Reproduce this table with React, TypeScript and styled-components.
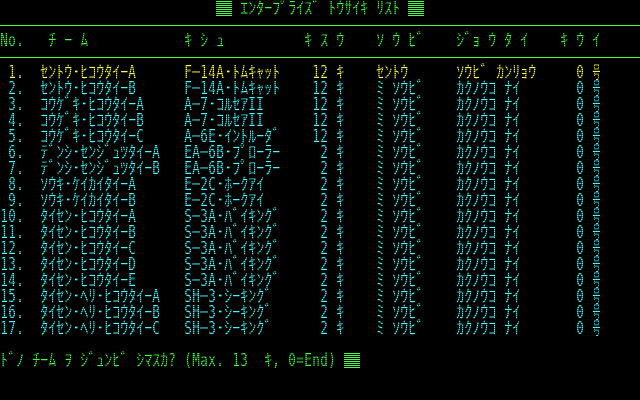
import React from 'react';
import styled, { createGlobalStyle } from 'styled-components';

const GREEN = '#44ff44';
const YELLOW = '#ffff44';
const CYAN = '#44ffff';

const GlobalStyle = createGlobalStyle`
  html, body {
    margin: 0;
    padding: 0;
    background: #000;
  }
`;

const Screen = styled.div`
  width: 640px;
  height: 400px;
  background: #000;
  overflow: hidden;
  display: flex;
  flex-direction: column;
  font-family: 'DejaVu Sans Mono', 'Noto Sans CJK JP', monospace;
  font-size: 17px;
  line-height: 16px;
  /* crt scanlines: even pixel rows dimmed */
  mask-image: repeating-linear-gradient(to bottom, rgba(0, 0, 0, 0.45) 0 1px, #000 1px 2px);
  -webkit-mask-image: repeating-linear-gradient(to bottom, rgba(0, 0, 0, 0.45) 0 1px, #000 1px 2px);
`;

const Row = styled.div<{ $color: string }>`
  display: flex;
  height: 16px;
  color: ${(p) => p.$color};
`;

const RuleRow = styled.div`
  height: 16px;
  display: flex;
  flex-direction: column;
  padding-top: 9px;
  box-sizing: border-box;

  &::after {
    content: '';
    height: 1px;
    background: ${GREEN};
  }
`;

const Cell = styled.span`
  width: 8px;
  height: 16px;
  flex: none;
  display: flex;
  justify-content: center;
  white-space: pre;
`;

const Glyph = styled.span<{ $kind: 'latin' | 'kana' | 'wide' }>`
  display: inline-block;
  transform: scaleX(${(p) => (p.$kind === 'latin' ? 0.74 : p.$kind === 'kana' ? 0.94 : 0.46)});
  transform-origin: center;
`;

const Block = styled.span`
  width: 16px;
  height: 16px;
  flex: none;
  background: repeating-linear-gradient(to bottom, transparent 0 1px, ${GREEN} 1px 2px);
`;

const kindOf = (ch: string): 'latin' | 'kana' | 'wide' => {
  const c = ch.charCodeAt(0);
  if (c >= 0xff61 && c <= 0xff9f) return 'kana';
  if (c >= 0x3000) return 'wide';
  return 'latin';
};

// place text segments on an 80 column line
const place = (parts: [number, string][]) => {
  const line = Array(80).fill(' ');
  parts.forEach(([col, text]) => {
    Array.from(text).forEach((ch, i) => {
      line[col + i] = ch;
    });
  });
  return line;
};

const TextLine = ({ parts, color }: { parts: [number, string][]; color: string }) => {
  const chars = place(parts);
  const out: React.ReactNode[] = [];
  for (let i = 0; i < chars.length; i++) {
    const ch = chars[i];
    if (ch === '\t') continue;
    if (ch === '▤') {
      out.push(<Block key={i} />);
      continue;
    }
    const shown = ch === '-' ? '─' : ch;
    out.push(
      <Cell key={i}>
        {ch === ' ' ? ' ' : <Glyph $kind={kindOf(shown)}>{shown}</Glyph>}
      </Cell>
    );
  }
  return <Row $color={color}>{out}</Row>;
};

type Team = { name: string; plane: string; count: number; equip: string; status: string };

const teams: Team[] = [
  { name: 'ｾﾝﾄｳ･ﾋｺｳﾀｲｰA', plane: 'F-14A･ﾄﾑｷｬｯﾄ', count: 12, equip: 'ｾﾝﾄｳ', status: 'ｿｳﾋﾞ ｶﾝﾘｮｳ' },
  { name: 'ｾﾝﾄｳ･ﾋｺｳﾀｲｰB', plane: 'F-14A･ﾄﾑｷｬｯﾄ', count: 12, equip: 'ﾐ ｿｳﾋﾞ', status: 'ｶｸﾉｳｺ ﾅｲ' },
  { name: 'ｺｳｹﾞｷ･ﾋｺｳﾀｲｰA', plane: 'A-7･ｺﾙｾｱII', count: 12, equip: 'ﾐ ｿｳﾋﾞ', status: 'ｶｸﾉｳｺ ﾅｲ' },
  { name: 'ｺｳｹﾞｷ･ﾋｺｳﾀｲｰB', plane: 'A-7･ｺﾙｾｱII', count: 12, equip: 'ﾐ ｿｳﾋﾞ', status: 'ｶｸﾉｳｺ ﾅｲ' },
  { name: 'ｺｳｹﾞｷ･ﾋｺｳﾀｲｰC', plane: 'A-6E･ｲﾝﾄﾙｰﾀﾞ', count: 12, equip: 'ﾐ ｿｳﾋﾞ', status: 'ｶｸﾉｳｺ ﾅｲ' },
  { name: 'ﾃﾞﾝｼ･ｾﾝｼﾞｭﾂﾀｲｰA', plane: 'EA-6B･ﾌﾟﾛｰﾗｰ', count: 2, equip: 'ﾐ ｿｳﾋﾞ', status: 'ｶｸﾉｳｺ ﾅｲ' },
  { name: 'ﾃﾞﾝｼ･ｾﾝｼﾞｭﾂﾀｲｰB', plane: 'EA-6B･ﾌﾟﾛｰﾗｰ', count: 2, equip: 'ﾐ ｿｳﾋﾞ', status: 'ｶｸﾉｳｺ ﾅｲ' },
  { name: 'ｿｳｷ･ｹｲｶｲﾀｲｰA', plane: 'E-2C･ﾎｰｸｱｲ', count: 2, equip: 'ﾐ ｿｳﾋﾞ', status: 'ｶｸﾉｳｺ ﾅｲ' },
  { name: 'ｿｳｷ･ｹｲｶｲﾀｲｰB', plane: 'E-2C･ﾎｰｸｱｲ', count: 2, equip: 'ﾐ ｿｳﾋﾞ', status: 'ｶｸﾉｳｺ ﾅｲ' },
  { name: 'ﾀｲｾﾝ･ﾋｺｳﾀｲｰA', plane: 'S-3A･ﾊﾞｲｷﾝｸﾞ', count: 2, equip: 'ﾐ ｿｳﾋﾞ', status: 'ｶｸﾉｳｺ ﾅｲ' },
  { name: 'ﾀｲｾﾝ･ﾋｺｳﾀｲｰB', plane: 'S-3A･ﾊﾞｲｷﾝｸﾞ', count: 2, equip: 'ﾐ ｿｳﾋﾞ', status: 'ｶｸﾉｳｺ ﾅｲ' },
  { name: 'ﾀｲｾﾝ･ﾋｺｳﾀｲｰC', plane: 'S-3A･ﾊﾞｲｷﾝｸﾞ', count: 2, equip: 'ﾐ ｿｳﾋﾞ', status: 'ｶｸﾉｳｺ ﾅｲ' },
  { name: 'ﾀｲｾﾝ･ﾋｺｳﾀｲｰD', plane: 'S-3A･ﾊﾞｲｷﾝｸﾞ', count: 2, equip: 'ﾐ ｿｳﾋﾞ', status: 'ｶｸﾉｳｺ ﾅｲ' },
  { name: 'ﾀｲｾﾝ･ﾋｺｳﾀｲｰE', plane: 'S-3A･ﾊﾞｲｷﾝｸﾞ', count: 2, equip: 'ﾐ ｿｳﾋﾞ', status: 'ｶｸﾉｳｺ ﾅｲ' },
  { name: 'ﾀｲｾﾝ･ﾍﾘ･ﾋｺｳﾀｲｰA', plane: 'SH-3･ｼｰｷﾝｸﾞ', count: 2, equip: 'ﾐ ｿｳﾋﾞ', status: 'ｶｸﾉｳｺ ﾅｲ' },
  { name: 'ﾀｲｾﾝ･ﾍﾘ･ﾋｺｳﾀｲｰB', plane: 'SH-3･ｼｰｷﾝｸﾞ', count: 2, equip: 'ﾐ ｿｳﾋﾞ', status: 'ｶｸﾉｳｺ ﾅｲ' },
  { name: 'ﾀｲｾﾝ･ﾍﾘ･ﾋｺｳﾀｲｰC', plane: 'SH-3･ｼｰｷﾝｸﾞ', count: 2, equip: 'ﾐ ｿｳﾋﾞ', status: 'ｶｸﾉｳｺ ﾅｲ' },
];

const App = () => {
  return (
    <>
      <GlobalStyle />
      <Screen>
        <TextLine color={GREEN} parts={[[27, '▤\t ｴﾝﾀｰﾌﾟﾗｲｽﾞ ﾄｳｻｲｷ ﾘｽﾄ ▤\t']]} />
        <RuleRow />
        <TextLine
          color={GREEN}
          parts={[
            [0, 'No.'],
            [6, 'ﾁ ｰ ﾑ'],
            [23, 'ｷ ｼ ｭ'],
            [38, 'ｷ ｽ ｳ'],
            [47, 'ｿ ｳ ﾋﾞ'],
            [57, 'ｼﾞｮ ｳ ﾀ ｲ'],
            [70, 'ｷ ｳ ｲ'],
          ]}
        />
        <RuleRow />
        {teams.map((t, i) => (
          <TextLine
            key={i}
            color={i === 0 ? YELLOW : CYAN}
            parts={[
              [0, `${String(i + 1).padStart(2)}.`],
              [5, t.name],
              [23, t.plane],
              [39, String(t.count).padStart(2)],
              [42, 'ｷ'],
              [47, t.equip],
              [57, t.status],
              [72, '0'],
              [74, '号'],
            ]}
          />
        ))}
        <Row $color={GREEN} />
        <TextLine color={GREEN} parts={[[0, 'ﾄﾞﾉ ﾁｰﾑ ｦ ｼﾞｭﾝﾋﾞ ｼﾏｽｶ? (Max. 13  ｷ, 0=End) ▤\t']]} />
      </Screen>
    </>
  );
};

export default App;
